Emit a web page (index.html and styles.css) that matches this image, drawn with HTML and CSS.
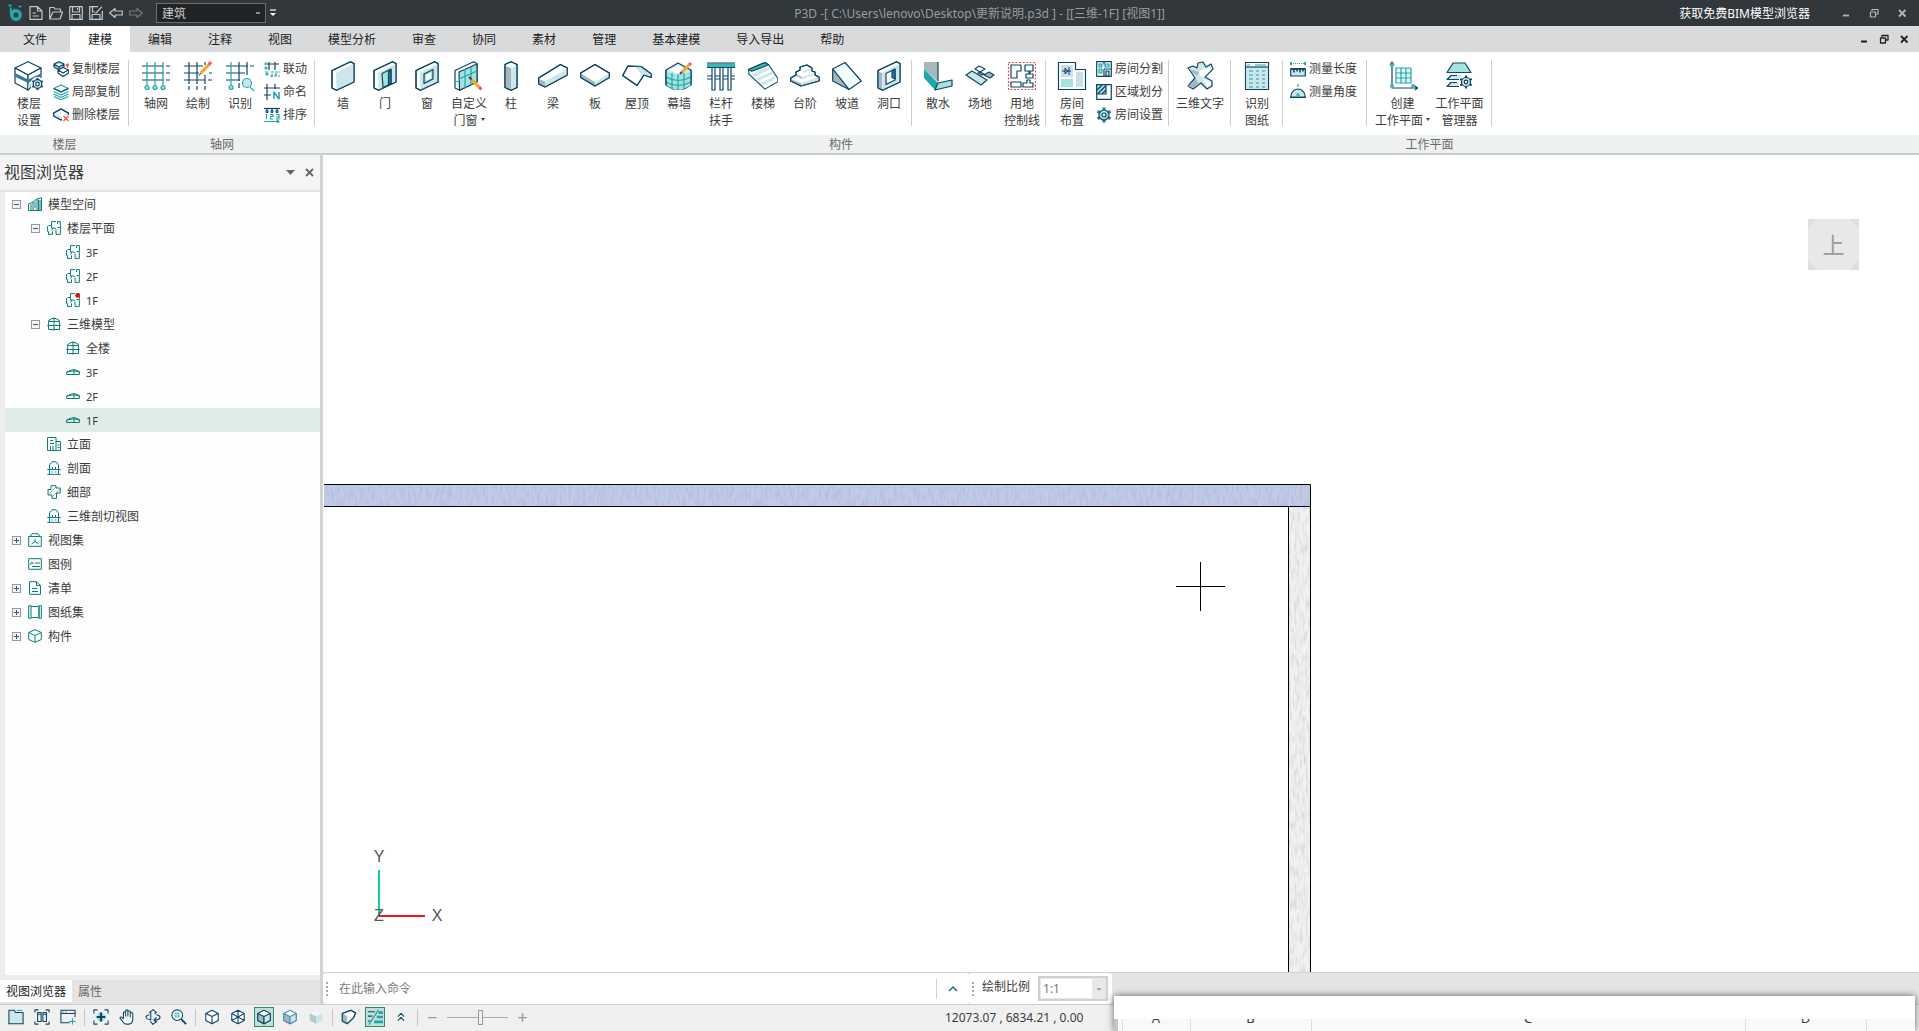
FILE: index.html
```html
<!DOCTYPE html>
<html lang="zh-CN">
<head>
<meta charset="utf-8">
<title>P3D - 三维-1F</title>
<meta name="viewport" content="width=device-width, initial-scale=1">
<link rel="stylesheet" href="styles.css">
</head>
<body>
<svg class="defs" aria-hidden="true">
  <symbol id="plan" viewBox="0 0 14 14"><path d="M1.500 4.500H4.500V.6H9M10.500 3V.6H13.400V6.500H10.500M13.400 7V13.400H9V9M.6 5V10.500H1.500V13.400H5.500V10.500M4.500 4.500V7H6M5 9.500V8L6 7H8L9 8.500"/></symbol>
  <symbol id="tower" viewBox="0 0 14 14"><path d="M1.500 4.500V12.500M12.500 4.500V12.500M7 .3V13.700M.3 8.500H13.700M1.500 12.500H12.500M1.500 4.500H12.500M1 4L5 1.500H9L13 4"/></symbol>
  <symbol id="floor" viewBox="0 0 14 14"><path d="M.6 9.500V7L4 5.500 8 4.500 13.400 6.500V9.500ZM8 4.500V9.500M.6 7L6 6H9L13.400 7"/></symbol>
  <symbol id="section" viewBox="0 0 14 14"><path d="M2.500 8V4L5 .8H9L11.500 4V8M.3 8.500H13.700M2.500 8.500V13M11.500 8.500V13M.3 13.400H13.700M5.500 6V8M8.500 6V8M4.500 11H6M8 11H9.500"/></symbol>
</svg>

<header class="titlebar">
  <div class="quick">
    <svg class="logo" viewBox="0 0 16 18"><circle cx="8.500" cy="11" r="4.200" fill="none" stroke="#22a7b4" stroke-width="3.400"/><path d="M3.300 3.500V10M1 1.500H4M6 5.500h1" stroke="#22a7b4" stroke-width="2"/><path d="M12.500 1v3M11 2.500h3" stroke="#22a7b4" stroke-width="1"/></svg>
    <button aria-label="新建"><svg viewBox="0 0 14 14"><path d="M1 .7H8.500L13 5V13.300H1ZM8.500 .7V5H13M3.500 7H7M3.500 10H10"/></svg></button>
    <button aria-label="打开"><svg viewBox="0 0 14 14"><path d="M.7 13V1.500H5L6 3H11.500V5.500M.7 13L4 6H13.500L11 13Z"/></svg></button>
    <button aria-label="保存"><svg viewBox="0 0 14 14"><path d="M.7 .7H13.300V13.300H.7ZM3.500 1V6H10.500V1M3 13V8.500H11V13M8.500 2V4"/></svg></button>
    <button aria-label="另存为"><svg viewBox="0 0 14 14"><path d="M9 .7H.7V13.300H13.300V5M3.500 1V6H6M3 13V8.500H11V13M13 .7L6.500 7.500"/></svg></button>
    <button aria-label="撤销"><svg viewBox="0 0 14 14"><path d="M.7 7L6 2.500V5H13.300V9H6V11.500Z"/></svg></button>
    <button class="dim" aria-label="重做"><svg viewBox="0 0 14 14"><path d="M13.300 7L8 2.500V5H.7V9H8V11.500Z"/></svg></button>
    <select class="discipline" aria-label="专业"><option>建筑</option></select>
    <button class="custom" aria-label="自定义"><svg viewBox="0 0 6 8"><path d="M0 1h6" stroke="#fff"/><path d="M0 4h6l-3 3z" fill="#fff" stroke="none"/></svg></button>
  </div>
  <div class="doc-title">P3D -[ C:\Users\lenovo\Desktop\更新说明.p3d ] - [[三维-1F] [视图1]]</div>
  <a class="viewer-link" href="#">获取免费BIM模型浏览器</a>
  <div class="win">
    <button aria-label="最小化"><svg viewBox="0 0 10 10"><path d="M2 7.500h6" stroke-width="1.800"/></svg></button>
    <button aria-label="还原"><svg viewBox="0 0 10 10"><path d="M3 3V1.500H9V6H6.500M1.500 4H6.500V9H1.500Z"/></svg></button>
    <button aria-label="关闭"><svg viewBox="0 0 10 10"><path d="M2 2l6.500 6.500M8.500 2L2 8.500" stroke-width="1.800"/></svg></button>
  </div>
</header>

<nav class="menu">
  <button class="file">文件</button><button class="active">建模</button><button>编辑</button><button>注释</button><button>视图</button><button>模型分析</button><button>审查</button><button>协同</button><button>素材</button><button>管理</button><button>基本建模</button><button>导入导出</button><button>帮助</button>
  <div class="win doc">
    <button aria-label="最小化文档"><svg viewBox="0 0 10 10"><path d="M2 7.500h6" stroke-width="2"/></svg></button>
    <button aria-label="还原文档"><svg viewBox="0 0 10 10"><path d="M3 3V1.500H9V6H6.500M1.500 4H6.500V9H1.500Z" stroke-width="1.300"/></svg></button>
    <button aria-label="关闭文档"><svg viewBox="0 0 10 10"><path d="M2 2l6.500 6.500M8.500 2L2 8.500" stroke-width="1.800"/></svg></button>
  </div>
</nav>

<section class="ribbon">
  <div class="group">
    <div class="tools">
      <div class="set storeys">
        <button class="big"><svg viewBox="0 0 30 30"><path class="w" d="M1 7L14 .7 27 7 14 14Z"/><path class="w" d="M1 7L14 14V29L1 22Z"/><path class="w" d="M27 7V16L14 29V14Z"/><path d="M1 12l13 6.500V22L1 15.500zM14 18.500l13-6V15l-13 7z" fill="#2f789f" stroke="none"/><path d="M14 24l7-4v3l-7 5z" class="b" stroke="none"/><circle class="w" cx="23.500" cy="23" r="7" stroke="none"/><path d="M23.500 17v12M18.300 20l10.400 6M18.300 26l10.400-6" stroke-width="2"/><circle class="p" cx="23.500" cy="23" r="4.300"/><circle class="w" cx="23.500" cy="23" r="1.800"/></svg><span>楼层<br>设置</span></button>
        <div class="stack">
          <button><svg viewBox="0 0 16 16"><path class="b" d="M1 3L6 .7 11 3V6L6 9 1 6ZM1 3l5 3 5-3M6 6v3"/><path class="w" d="M5 9l5-2.500L15.500 9v3L10 15.500 5 12ZM5 9l5 3 5.500-3"/><path d="M14.500 7V3M13 4.500L14.500 3 16 4.500" stroke="#ee4b4b"/></svg>复制楼层</button>
          <button><svg viewBox="0 0 16 16"><path class="w n" d="M.7 4.500L8 1l7.300 3.500L8 8Z"/><path class="n" d="M.7 7.500L8 11l7.300-3.500M.7 10L8 13.500 15.300 10M.7 12.500L8 15.700l7.300-3.200"/><path d="M.7 4.500L8 8l7.300-3.500"/></svg>局部复制</button>
          <button><svg viewBox="0 0 16 16"><path class="w" d="M.7 6L8 2l7.300 4v2.500L8 13 .7 9Z"/><path class="p" d="M.7 6L8 9.500 15.300 6v2.500L8 13 .7 9Z" stroke="none"/><path d="M.7 6L8 2l7.300 4v2.500L8 13 .7 9Z"/><path class="w" d="M9 8h7v7H9z" stroke="none"/><path d="M10.500 9l5 5M15.500 9l-5 5" stroke="#ee4b4b"/></svg>删除楼层</button>
        </div>
      </div>
    </div>
    <div class="caption">楼层</div>
  </div>

  <div class="group">
    <div class="tools">
      <div class="set grids">
        <button class="big"><svg viewBox="0 0 30 30"><path d="M1 5H23M1 12H23M1 19H23M25 5h4M25 12h4M25 19h4"/><path class="n" d="M6 1V24M14 1V24M22 1V24"/><circle class="n b" cx="6" cy="26.500" r="2"/><circle class="n b" cx="14" cy="26.500" r="2"/><circle class="n b" cx="22" cy="26.500" r="2"/></svg><span>轴网</span></button>
        <button class="big"><svg viewBox="0 0 30 30"><path d="M1 5H20M1 12H16M1 19H22M26 12h3M25 19h4M6 1V23M14 1V23M22 14V23M22 1v3M6 25v4M14 25v4M22 25v4"/><path d="M18 12L25.500 4" stroke="#f7a51c" stroke-width="3"/><path d="M25.500 4L28 1" stroke="#f05a55" stroke-width="3"/><path d="M16 14.500L18 12" stroke="#444"/></svg><span>绘制</span></button>
        <button class="big"><svg viewBox="0 0 30 30"><path d="M1 5H23M1 12H20M1 19H15M25 5h4M14 1V20M22 1V14M14 22v5"/><path class="n" d="M6 1V24"/><circle class="n b" cx="6" cy="26.500" r="2"/><path class="n" d="M25 26l4 4"/><circle class="n p" cx="22" cy="22" r="4.500"/></svg><span>识别</span></button>
        <div class="stack">
          <button><svg viewBox="0 0 16 16"><path d="M5 1v8M11 1v8M3 3h12"/><path class="n" d="M1 11h4M7 11h9M2 1v3M0 3h2M8 13v3M12 12v4M6 15h10" stroke-dasharray="3 1"/><circle class="n" cx="2" cy="7" r="1"/><circle class="n" cx="3" cy="13" r="1"/></svg>联动</button>
          <button><svg viewBox="0 0 16 16"><path d="M3 0v16M0 4h16M11 0v5M0 11h7"/><path class="n" d="M10 15V8l5 7V8" stroke-width="1.500"/></svg>命名</button>
          <button><svg viewBox="0 0 16 16"><path d="M0 1.500h16"/><path d="M3 1v3M8 1v3M13 1v3"/><circle cx="3" cy="4.500" r="1"/><circle cx="8" cy="4.500" r="1"/><circle cx="13" cy="4.500" r="1"/><path class="n" d="M2.500 7v5M6 7.500h3v2H6.500V12H9M12 7.500h3V12h-3M12 10h3M0 14.500h15M13 13l2 1.500-2 1.500"/></svg>排序</button>
        </div>
      </div>
    </div>
    <div class="caption">轴网</div>
  </div>

  <div class="group">
    <div class="tools">
      <div class="set parts">
        <button class="big"><svg viewBox="0 0 30 30"><path class="w" d="M4 9.500L22.500 .7 26 2.500V21L8.500 29.300 4 27Z"/><path class="p" d="M8 12L26 2.500V21L8.500 29.300Z" stroke="none"/><path d="M4 9.500L22.500 .7 26 2.500V21L8.500 29.300 4 27Z"/></svg><span>墙</span></button>
        <button class="big"><svg viewBox="0 0 30 30"><path class="w" d="M4 9.500L22.500 .7 26 2.500V21L8.500 29.300 4 27Z"/><path class="p" d="M8 12L26 2.500V21L8.500 29.300Z" stroke="none"/><path d="M4 9.500L22.500 .7 26 2.500V21L8.500 29.300 4 27Z"/><path class="b" d="M12 12.500L21 8V22.500L13 26.500Z"/><path d="M18.500 10.500L21 9V22L18.500 23.500Z" fill="#2f789f"/></svg><span>门</span></button>
        <button class="big"><svg viewBox="0 0 30 30"><path class="w" d="M4 9.500L22.500 .7 26 2.500V21L8.500 29.300 4 27Z"/><path class="p" d="M8 12L26 2.500V21L8.500 29.300Z" stroke="none"/><path d="M4 9.500L22.500 .7 26 2.500V21L8.500 29.300 4 27Z"/><path class="b" d="M12 13L21 8.500V18L12 22.500Z"/><path class="w" d="M14 14l5-2.500V17l-5 2.500z" stroke="none"/></svg><span>窗</span></button>
        <button class="big"><svg viewBox="0 0 30 30"><path class="w" d="M1 9.500L19.500 .7 23 2.500V21L5.500 29.300 1 27Z"/><path class="b" d="M5 11L23 3V21L5.500 29.300Z"/><path class="n" d="M5 18L23 10M11 8V27M17 6V24M1 20l4 1"/><path d="M17.500 18.500L25 26" stroke="#f7a51c" stroke-width="3"/><path d="M25 26l2.500 2.500" stroke="#f05a55" stroke-width="3"/><path d="M15 16l2.500 2.500" stroke="#444" stroke-width="2"/></svg><span>自定义<br>门窗<i></i></span></button>
        <button class="big"><svg viewBox="0 0 30 30"><path class="w" d="M9 3.500L15 .7 21 3.500V26.500L15 29.300 9 26.500Z"/><path class="g" d="M9.500 5L15 7V29L9.500 26Z" stroke="none"/><path class="p" d="M15 7l5.500-2V26L15 29z" stroke="none"/><path d="M9 3.500L15 .7 21 3.500V26.500L15 29.300 9 26.500Z"/></svg><span>柱</span></button>
        <button class="big"><svg viewBox="0 0 30 30"><path class="w" d="M.7 17L22.500 3.500 29.300 7V14L7 26 .7 23Z"/><path class="p" d="M7 20L29.300 8V14L7 26Z" stroke="none"/><path d="M1 18L7 20.500V26L1 23Z" class="g" stroke="none"/><path d="M.7 17L22.500 3.500 29.300 7V14L7 26 .7 23Z"/></svg><span>梁</span></button>
        <button class="big"><svg viewBox="0 0 30 30"><path class="w" d="M.7 12L15 3.500 29.300 12V16.500L15 25 .7 16.500Z"/><path class="g" d="M1 12.500L15 21V25L1 16.500Z" stroke="none"/><path class="p" d="M15 21l14-8.500v4L15 25z" stroke="none"/><path d="M.7 12L15 3.500 29.300 12V16.500L15 25 .7 16.500Z"/></svg><span>板</span></button>
        <button class="big"><svg viewBox="0 0 30 30"><path class="w" d="M.7 14.500L6 5 19 5.500 29.300 13V16.500L22 14 15 24.500Z"/><path class="p" d="M13 5.500H19L29 13v3l-7-2-3-1z" stroke="none"/><path d="M.7 14.500L6 5 19 5.500 29.300 13V16.500L22 14 15 24.500Z"/></svg><span>屋顶</span></button>
        <button class="big"><svg viewBox="0 0 30 30"><path class="p" d="M2 9L14 2 27 9V24L20 28H9L2 24Z"/><path class="w" d="M5 9l9-5 6 4-6 5z" stroke="none"/><path class="b" d="M2.500 10Q14 18 27 10V24Q14 33 2.500 24Z" stroke="none"/><path class="n" d="M2 16Q14 23 27 16M2 21Q14 28 27 21M8 12V28M14 13V29M20 12V28"/><path d="M2 9v15M27 9v15"/><path d="M18 11L25 4" stroke="#f7a51c" stroke-width="3"/><path d="M25 4l2-2" stroke="#f05a55" stroke-width="3"/><path d="M16 13l2-2" stroke="#444" stroke-width="2"/></svg><span>幕墙</span></button>
        <button class="big"><svg viewBox="0 0 30 30"><path class="t" d="M1 2.500H29V6.500H1Z" stroke="none"/><path d="M1 2H29M1 6.500H29M1 15h28M1 18h28"/><path class="w" d="M6 7V29H9V7M14 7V29H17V7M22 7V29H25V7"/></svg><span>栏杆<br>扶手</span></button>
        <button class="big"><svg viewBox="0 0 32 30"><path class="w" d="M.7 8L18 .7 22 3 32 18V21L18 29 1 13Z"/><path class="t" d="M.7 8L18 .7 22 3 4 10Z"/><path class="p" d="M4 13l19-8v3L7 16zM8 18l18-8v3l-15 7zM13 23l16-8v3l-13 7z" stroke="none"/></svg><span>楼梯</span></button>
        <button class="big"><svg viewBox="0 0 30 30"><path class="w" d="M.7 17L6 14V11l4-2V6l7-2 5 3v3l3 1v3l4 2v4L11 25 .7 20Z"/><path class="g" d="M1 18l10 4v3L1 20zM6 13l6 3v2l-6-3z" stroke="none"/><path class="p" d="M11 22l18-6v3L11 25zM12 16l13-4v2l-13 4zM13 10l9-3v2l-9 3z" stroke="none"/><path d="M.7 17L6 14V11l4-2V6l7-2 5 3v3l3 1v3l4 2v4L11 25 .7 20Z"/></svg><span>台阶</span></button>
        <button class="big"><svg viewBox="0 0 30 30"><path fill="#f2fcfc" d="M.7 8L13 1.500 29.300 20 17 28.500Z"/><path class="g" d="M.7 8L17 28.500.7 20Z"/></svg><span>坡道</span></button>
        <button class="big"><svg viewBox="0 0 30 30"><path class="w" d="M4 9.500L22.500 .7 26 2.500V21L8.500 29.300 4 27Z"/><path class="p" d="M8 12L26 2.500V21L8.500 29.300Z" stroke="none"/><path class="g" d="M4 10l4 2V29l-4-2z" stroke="none"/><path d="M4 9.500L22.500 .7 26 2.500V21L8.500 29.300 4 27Z"/><path class="w" d="M12 12.500L21 8V19L12 23.500Z"/><path d="M18 10l3-1.500V18l-3-1.500z" fill="#2f789f"/></svg><span>洞口</span></button>
      </div>
      <div class="set site">
        <button class="big"><svg viewBox="0 0 30 30"><path class="g" d="M1 1H15V21L1 8Z" stroke="none"/><path d="M15 1V20"/><path d="M1 8L15 22 12 29 1 17Z" class="d" stroke="none"/><path d="M15 22L29 19v6L12 29Z" class="b"/></svg><span>散水</span></button>
        <button class="big"><svg viewBox="0 0 30 30"><path class="p" d="M1 14L7 10 22 19 16 24Z"/><path class="w" d="M10 8l4-3 6 3-5 3z"/><path class="g" d="M19 14l5-3 5 3-4 3zM13 12l2-1 4 2-2 1z"/></svg><span>场地</span></button>
        <button class="big"><svg viewBox="0 0 30 30"><path d="M1.500 1.500H28.500V28.500H1.500Z" stroke="#ee4b4b" stroke-dasharray="2 1.500"/><path class="w" d="M4 4H14V10H10V17H4ZM18 4h8v6h-3v3h3v4h-7v-4h3v-3h-4zM4 21H14v5H4ZM16 22h4v-3h3v3h3v4H16z"/></svg><span>用地<br>控制线</span></button>
      </div>
      <div class="set rooms">
        <button class="big"><svg viewBox="0 0 30 30"><path class="w" d="M1.500 1.500H18.500V8.500H28.500V28.500H1.500Z"/><path fill="#c9dfe9" d="M4 4H16V16H4ZM19 11h7v15h-7z" stroke="none"/><path class="b" d="M4 18H16v8H4Z" stroke="none"/><path d="M5 10h9M8 7v6l3-3zM12 6v8" stroke-width="1"/></svg><span>房间<br>布置</span></button>
        <div class="stack">
          <button><svg viewBox="0 0 16 16"><path class="w" d="M.7 .7H15.300V15.300H.7ZM8 .7V3.500M8 8h7.300M8 8v7.300"/><path class="n b" d="M3 3h3v3H3zM9 3h4v3H9zM3 8h3v4H3z"/><path class="p" d="M10 10h3v5h-3z"/></svg>房间分割</button>
          <button><svg viewBox="0 0 16 16"><path class="w" d="M.7 .7H15.300V15.300H.7Z"/><path class="b" d="M.7 .7H10V10H.7Z"/><path d="M1 6L6 1M2 9.500L9.500 2M6 10l4-4"/></svg>区域划分</button>
          <button><svg viewBox="0 0 16 16"><path d="M8 .5v15M1.500 4.200l13 7.600M1.500 11.800l13-7.600" stroke="#2f789f" stroke-width="3"/><circle class="b" cx="8" cy="8" r="5"/><circle class="w" cx="8" cy="8" r="2"/></svg>房间设置</button>
        </div>
      </div>
      <div class="set text3d">
        <button class="big"><svg viewBox="0 0 30 30"><path class="p" d="M3 7L8 5 12 7 13 2 18 1 21 6 26 3 28 8 20 16 27 20 27 25 22 28 16 22 8 28 3 25 10 17 6 11Z"/><path class="g" d="M4 8l10 3-2 4-4-3zM3 25l8-7 3 5-6 4z" stroke="none"/><path class="w" d="M14 10l8-3 4-2 1 3-8 8-4-1zM18 18l8 3v3l-4 2z" stroke="none"/></svg><span>三维文字</span></button>
      </div>
      <div class="set sheets">
        <button class="big"><svg viewBox="0 0 30 30"><path class="w" d="M3.500 1.500H26.500V28.500H3.500Z"/><path class="p" d="M4 6H26V28H4Z" stroke="none"/><path d="M3.500 6H26.500"/><path class="n" d="M5 4h3M13 4h11M7 10h4M14 10h3M20 10h3M7 14h4M14 14h3M20 14h3M7 18h4M14 18h3M20 18h3M7 22h4M14 22h3M20 22h3M7 26h4M14 26h3M20 26h3"/></svg><span>识别<br>图纸</span></button>
      </div>
      <div class="set measures">
        <div class="stack">
          <button><svg viewBox="0 0 16 16"><path class="n" d="M1 2.500h14" stroke-dasharray="1 1"/><path d="M0 2.500h2M14 2.500h2" class="n" stroke-width="3"/><path class="p" d="M.7 7.700H15.300V15H.7Z"/><path d="M1 8h14M4 8v3.500M7 8v2.500M10 8v3.500M13 8v2.500" stroke-width="1.500"/></svg>测量长度</button>
          <button><svg viewBox="0 0 16 16"><path class="p" d="M1 13.300V12a7 7 0 0114 0V13.300Z"/><path d="M0 13.300H16"/><path class="n" d="M8 0v3M6 11h4M8 9v3"/></svg>测量角度</button>
        </div>
      </div>
    </div>
    <div class="caption">构件</div>
  </div>

  <div class="group">
    <div class="tools">
      <div class="set plane">
        <button class="big"><svg viewBox="0 0 30 30"><path d="M4 2V27H29M2 4l2-3 2 3M27 25l2.500 2-2.500 2"/><path class="n" fill="#e8fbfb" d="M8 7H23V22H8ZM13 7V22M18 7V22M8 12H23M8 17H23"/><circle class="t" cx="4" cy="4" r="2" stroke="none"/><circle class="t" cx="4" cy="25" r="2" stroke="none"/><circle class="t" cx="25" cy="25" r="2" stroke="none"/></svg><span>创建<br>工作平面<i></i></span></button>
        <button class="big"><svg viewBox="0 0 30 30"><path class="b" d="M8 2H20L26 11.500H2Z"/><path class="p" d="M6 14H22V18H2ZM5 21H16V25H2Z" stroke="none"/><path d="M12 14.500H6L2 18.500H14M12 21.500H6L2 25.500H14"/><circle class="w" cx="21" cy="21" r="7.500" stroke="none"/><path d="M21 14.500v13M15.300 17.800l11.400 6.500M15.300 24.300l11.400-6.500" stroke-width="2"/><circle class="p" cx="21" cy="21" r="4.500"/><circle class="w" cx="21" cy="21" r="1.800"/></svg><span>工作平面<br>管理器</span></button>
      </div>
    </div>
    <div class="caption">工作平面</div>
  </div>
</section>

<main class="workspace">
  <aside class="panel">
    <div class="panel-head">
      <h2>视图浏览器</h2>
      <button aria-label="选项"><svg viewBox="0 0 10 10"><path d="M1 3h9L5.500 8z" fill="#666" stroke="none"/></svg></button>
      <button aria-label="关闭面板"><svg viewBox="0 0 10 10"><path d="M2 2l7 7M9 2L2 9" stroke="#666" stroke-width="1.800"/></svg></button>
    </div>
    <ul class="tree">
      <li><div class="row"><button class="exp open" aria-label="折叠"></button><svg viewBox="0 0 14 14"><path d="M.5 13.500V7L5 5V13.500ZM5 5L9 2V13.500M9 2L13.500 .7V13.500H.5M2 8h2M2 10h2M2 12h2M6 6h2M6 8h2M6 10h2M10.500 3v10M12 3v10"/></svg>模型空间</div>
        <ul>
          <li><div class="row"><button class="exp open" aria-label="折叠"></button><svg><use href="#plan"/></svg>楼层平面</div>
            <ul>
              <li><div class="row storey"><svg><use href="#plan"/></svg>3F</div></li>
              <li><div class="row storey"><svg><use href="#plan"/></svg>2F</div></li>
              <li><div class="row storey"><svg><use href="#plan"/><circle cx="11.500" cy="2.500" r="2.200" fill="#f00" stroke="none"/></svg>1F</div></li>
            </ul></li>
          <li><div class="row"><button class="exp open" aria-label="折叠"></button><svg><use href="#tower"/></svg>三维模型</div>
            <ul>
              <li><div class="row"><svg><use href="#tower"/></svg>全楼</div></li>
              <li><div class="row storey"><svg><use href="#floor"/></svg>3F</div></li>
              <li><div class="row storey"><svg><use href="#floor"/></svg>2F</div></li>
              <li><div class="row storey selected"><svg><use href="#floor"/></svg>1F</div></li>
            </ul></li>
          <li><div class="row"><svg viewBox="0 0 14 14"><path d="M.5 .5H9V13.500H.5ZM9 4.500H13.500V13.500H9M3 3.500H6M3 6.500H7M3.500 9V13M6 9V13M10.500 8h2M10.500 10.500h2"/></svg>立面</div></li>
          <li><div class="row"><svg><use href="#section"/></svg>剖面</div></li>
          <li><div class="row"><svg viewBox="0 0 14 14"><path d="M2 9L9 2M5 12L13 4" stroke="#aaa"/><path d="M4 .7H9V3H13.300V8H9.500V13.300H5V10H1V4.500H4Z"/></svg>细部</div></li>
          <li><div class="row"><svg><use href="#section"/></svg>三维剖切视图</div></li>
        </ul></li>
      <li><div class="row"><button class="exp" aria-label="展开"></button><svg viewBox="0 0 14 14"><path d="M.7 3.500H13.300V13.300H.7ZM2 3.500L4 .7H10L12 3.500M7 6v2.500M7 8.500L3.500 11M7 8.500L10.500 11"/></svg>视图集</div></li>
      <li><div class="row"><svg viewBox="0 0 14 14"><path d="M.7 1.700H13.300V12.300H.7ZM2 8L4 5 5.500 7M7 6h5M4 9.500h8"/></svg>图例</div></li>
      <li><div class="row"><button class="exp" aria-label="展开"></button><svg viewBox="0 0 14 14"><path d="M1.500 .7H8.500L12.500 4.500V13.300H1.500ZM8.500 .7V4.500H12.500M4 7.500H9M4 10.500H10"/></svg>清单</div></li>
      <li><div class="row"><button class="exp" aria-label="展开"></button><svg viewBox="0 0 14 14"><path d="M.7 .7H3V13.300H.7ZM3 1.500H11V12.500H3M11 .7h2.300V13.300H11Z"/></svg>图纸集</div></li>
      <li><div class="row"><button class="exp" aria-label="展开"></button><svg viewBox="0 0 14 14"><path d="M.7 3.500L7 .7l6.300 2.800V10.500L7 13.300 .7 10.500ZM.7 3.500L7 6.500l6.300-3M7 6.500V13"/></svg>构件</div></li>
    </ul>
    <div class="tabs"><button class="active">视图浏览器</button><button>属性</button></div>
  </aside>

  <div class="stage">
    <div class="canvas">
      <svg class="drawing">
        <defs>
          <filter id="grain" x="0" y="0" width="100%" height="100%">
            <feTurbulence type="fractalNoise" baseFrequency="0.35 0.09" numOctaves="2" seed="4"/>
            <feColorMatrix values="0 0 0 0 .3  0 0 0 0 .35  0 0 0 0 .45  1.200 0 0 0 -.5"/>
          </filter>
        </defs>
        <rect x="966" y="351" width="21" height="100%" fill="#f1f1f1"/>
        <rect x="966" y="351" width="21" height="100%" filter="url(#grain)" opacity=".6"/>
        <path d="M965.500 351V2000M987.500 351V2000" stroke="#000"/>
        <rect x="1" y="329" width="986" height="22" fill="#bfcbe7"/>
        <rect x="1" y="330" width="986" height="21" filter="url(#grain)" opacity=".6"/>
        <path d="M1 329.500H987.500V351.500H1" fill="none" stroke="#000"/>
        <path d="M853 431.500H902M877.500 407V456" stroke="#000"/>
        <path d="M56 715V761" stroke="#12cfa0" stroke-width="2"/>
        <path d="M56 761H102" stroke="#f41414" stroke-width="2"/>
        <g class="axis" text-anchor="middle"><text x="56" y="707">Y</text><text x="56" y="766">Z</text><text x="114" y="766">X</text></g>
      </svg>
      <button class="viewcube">上</button>
    </div>
    <div class="commands">
      <div class="bar cmd">
        <span class="grip"></span>
        <input aria-label="命令" placeholder="在此输入命令">
        <button aria-label="展开命令"><svg viewBox="0 0 10 10"><path d="M1 7l4-4 4 4" stroke="#2b6a8c" stroke-width="1.600"/></svg></button>
      </div>
      <div class="bar scale">
        <span class="grip"></span>
        <label for="ratio">绘制比例</label>
        <select id="ratio"><option>1:1</option></select>
      </div>
    </div>
  </div>
</main>

<footer class="status">
  <div class="icons">
    <button aria-label="文件夹"><svg viewBox="0 0 18 18"><path class="p" d="M1 16.500V1.500H7L8.500 4H17V16.500Z"/><path class="n" d="M10 1.500h6"/></svg></button>
    <button aria-label="平铺窗口"><svg viewBox="0 0 18 18"><path d="M1 4V1H5M13 1h4V4M1 14v3H5M13 17h4V14M4 4H8V14H4ZM10 4h4v10h-4zM4 6h4M10 6h4"/></svg></button>
    <button aria-label="新建窗口"><svg viewBox="0 0 18 18"><path d="M11 15.500H1V1.500H17V9M1 5H17M3 3.300h1M6 3.300h1"/><path class="n" d="M14 10.500v7M10.500 14h7"/></svg></button>
    <span class="bar-sep"></span>
    <button aria-label="全图"><svg viewBox="0 0 18 18"><circle class="b" cx="9" cy="9" r="5" stroke="none"/><path d="M1 5V1H5M13 1h4V5M1 13v4H5M13 17h4V13"/><path d="M9 4V14M4 9H14" stroke-width="2.500"/></svg></button>
    <button aria-label="平移"><svg viewBox="0 0 18 18"><path class="w" d="M5 11V4Q6 2 7.500 4V8 2Q9 0 10 2V8 3Q11.500 1 12.700 3V9 5Q14 3 15.500 5V12Q15 17 11 17H8Q6 17 4 14L1 10Q2 8 4 10Z"/></svg></button>
    <button aria-label="旋转"><svg viewBox="0 0 18 18"><path d="M6.500 13V4H5L9 .7 13 4H11.500V6M11.500 13V14H13L9 17.300 6 14M5 6.500Q1 7.500 1 9 1.500 11.500 6 12M13 6.500Q17 7.500 17 9.500 16 12 11 12.500M13 9.500L10 12.300 13 15"/></svg></button>
    <button aria-label="缩放"><svg viewBox="0 0 18 18"><circle class="w" cx="7" cy="7" r="6"/><circle class="b" cx="7" cy="7" r="3.500" stroke="none"/><path class="n" d="M5 5h1M8 5h1M5 8h1M8 8h1" stroke-width="1.500"/><path d="M11.500 11.500L17 17" stroke-width="2"/></svg></button>
    <span class="bar-sep"></span>
    <button aria-label="线框"><svg viewBox="0 0 18 18"><path class="w" d="M2 5L9 1.500 16 5V13L9 16.500 2 13ZM2 5L9 8.500 16 5M9 8.500V16.500"/></svg></button>
    <button aria-label="透视线框"><svg viewBox="0 0 18 18"><path class="w" d="M2 5L9 1.500 16 5V13L9 16.500 2 13ZM2 5l14 8M16 5L2 13M9 1.500V16.500"/></svg></button>
    <button class="on" aria-label="隐藏线"><svg viewBox="0 0 18 18"><path class="w" d="M2 5L9 1.500 16 5V13L9 16.500 2 13Z"/><path class="g" d="M2 5L9 8.500V16.500L2 13Z"/><path class="p" d="M9 8.500L16 5V13L9 16.500Z"/></svg></button>
    <button class="shaded" aria-label="着色"><svg viewBox="0 0 18 18"><path class="w" d="M2 5L9 1.500 16 5V13L9 16.500 2 13Z"/><path class="g" d="M2 5L9 8.500V16.500L2 13Z"/><path class="p" d="M9 8.500L16 5V13L9 16.500Z"/></svg></button>
    <button aria-label="真实"><svg viewBox="0 0 18 18"><g stroke="none"><path fill="#e9f7f7" d="M2 5L9 2 16 5 9 8.500Z"/><path fill="#b5c8cc" d="M2 5L9 8.500V16.500L2 13Z"/><path class="p" d="M9 8.500L16 5V13L9 16.500Z"/></g></svg></button>
    <span class="bar-sep"></span>
    <button aria-label="剖切框"><svg viewBox="0 0 18 18"><path class="w" d="M1.500 5L11 1.500 16.500 4.500 14 10 7 16.500 1.500 13.500Z"/><path class="g" d="M1.500 5L7 8V16.500L1.500 13.500Z" stroke="none"/><path d="M1.500 5L11 1.500 16.500 4.500 14 10 7 16.500 1.500 13.500Z"/></svg></button>
    <button class="on" aria-label="线宽"><svg viewBox="0 0 18 18"><path d="M1 3h8M1 8h5M1 13.500h3"/><path class="n" d="M2 17.500L13 1" stroke-width="1.500"/><path class="n" d="M13 4h5M11 9h7M8 14.500h10" stroke-width="3"/></svg></button>
    <button aria-label="更多"><svg viewBox="0 0 18 18"><path d="M5.500 8.500L9 5l3.500 3.500M5.500 13L9 9.500l3.500 3.500"/></svg></button>
    <span class="bar-sep"></span>
    <button class="zoom" aria-label="缩小">−</button>
    <input type="range" aria-label="显示比例" min="0" max="100" value="55">
    <button class="zoom" aria-label="放大">+</button>
  </div>
  <output class="coords">12073.07 , 6834.21 , 0.00</output>
</footer>

<div class="sheet">
  <div class="sheet-view">
    <table>
      <tr><th></th><th>A</th><th>B</th><th>C</th><th>D</th><th></th></tr>
    </table>
  </div>
</div>
</body>
</html>
```
FILE: styles.css
```css
* { box-sizing: border-box; }
html, body { height: 100%; }
body {
  margin: 0;
  display: flex;
  flex-direction: column;
  overflow: hidden;
  position: relative;
  font: 12px/17px "Noto Sans", "Noto Sans CJK SC", sans-serif;
  color: #3c3c3c;
  background: #f0f0f0;
}
button, input, select { font: inherit; color: inherit; }
button { border: 0; padding: 0; background: none; }
svg { display: block; flex: none; fill: none; stroke: #0e4566; stroke-width: 1.2; stroke-linejoin: round; }
.defs { position: absolute; width: 0; height: 0; }
.w { fill: #fff; }
.p { fill: #cbe7ea; }
.b { fill: #a3e2dd; }
.t { fill: #35b9bb; }
.d { fill: #1fa5ad; }
.g { fill: #a5b9bd; }
.n { stroke: #1fa5ad; }

/* title bar */
.titlebar {
  flex: none;
  height: 26px;
  display: flex;
  align-items: center;
  background: #31373b;
  color: #9a9c9e;
}
.quick { display: flex; align-items: center; padding-left: 7px; }
.quick button { width: 20px; display: flex; justify-content: center; }
.quick svg { width: 14px; height: 14px; stroke: #c3c7c9; }
.quick .logo { width: 17px; height: 18px; margin-right: 2px; }
.quick .dim svg { stroke: #73787b; }
.quick .custom { width: 14px; }
.quick .custom svg { width: 6px; height: 8px; }
.discipline {
  appearance: none;
  width: 110px;
  height: 20px;
  margin-left: 10px;
  padding: 0 5px;
  border: 1px solid #6b6e70;
  color: #c8c8c8;
  background: linear-gradient(#888, #888) no-repeat right 5px center / 4px 2px #222324;
}
.doc-title { flex: 1; text-align: center; white-space: nowrap; overflow: hidden; }
.viewer-link { color: #fff; text-decoration: none; white-space: nowrap; }
.win { display: flex; gap: 18px; padding: 0 12px 0 31px; }
.win svg { width: 10px; height: 10px; stroke: #b4b6b8; }

/* menu */
.menu { flex: none; height: 26px; display: flex; background: #d9dadc; }
.menu > button { padding: 0 18px; white-space: nowrap; color: #222; }
.menu > .file { width: 70px; }
.menu > .active { background: #fff; }
.win.doc { margin-left: auto; align-items: center; gap: 10px; padding: 0 10px 0 0; }
.win.doc svg { stroke: #222; }

/* ribbon */
.ribbon {
  flex: none;
  display: flex;
  background: linear-gradient(#fff 83px, #edf1f2 83px);
  border-bottom: 2px solid #cdcdcd;
  white-space: nowrap;
}
.group { display: flex; flex-direction: column; }
.tools { height: 83px; padding-top: 8px; display: flex; }
.caption { height: 18px; line-height: 19px; text-align: center; color: #6a6a6a; }
.set { display: flex; align-items: flex-start; height: 66px; padding: 0 5px; border-right: 1px solid #cfcfcf; }
.storeys { padding: 0 8px; }
.grids { padding: 0 7px 0 6px; }
.parts { padding: 0 1px 0 7px; }
.site { padding: 0 2px 0 5px; }
.rooms { padding: 0 5px; }
.text3d { padding: 0 5px 0 6px; }
.sheets { padding: 0 4px 0 5px; }
.measures { padding: 0 9px 0 4px; }
.plane { padding: 0 3px 0 7px; }
.big { width: 42px; display: flex; flex-direction: column; align-items: center; gap: 4px; }
.big svg { width: 30px; height: 30px; margin-top: 1px; }
.text3d .big { width: 50px; }
.plane .big { width: 57px; }
.big i {
  display: inline-block;
  margin-left: 3px;
  vertical-align: 4px;
  border: 2px solid transparent;
  border-top: 3px solid #444;
  border-bottom: 0;
}
.stack { display: flex; flex-direction: column; padding-left: 3px; }
.stack button { height: 23px; padding-bottom: 6px; display: flex; align-items: center; gap: 3px; }
.stack svg { width: 16px; height: 16px; }

/* workspace */
.workspace { flex: 1; min-height: 0; display: flex; }
.panel {
  flex: none;
  width: 323px;
  display: flex;
  flex-direction: column;
  background: #ededed;
  border-right: 3px solid #d3d3d3;
}
.panel-head {
  display: flex;
  align-items: center;
  gap: 9px;
  height: 37px;
  padding: 0 6px 2px 4px;
  background: #f5f5f5;
  border-bottom: 2px solid #e4e4e4;
}
.panel-head h2 { flex: 1; margin: 0; font-size: 16px; font-weight: 400; line-height: 24px; }
.panel-head svg { width: 10px; height: 10px; }
.tree { flex: 1; min-height: 0; margin: 0 0 5px 5px; overflow: hidden; background: #fdfdfd; --indent: 7px; }
.tree, .tree ul { list-style: none; padding: 0; }
.tree ul { margin: 0; --indent: 26px; }
.tree ul ul { --indent: 45px; }
.row { display: flex; align-items: center; height: 24px; padding-left: calc(var(--indent) + 16px); }
.row:has(.exp) { padding-left: var(--indent); }
.row svg { width: 14px; height: 14px; margin-right: 6px; stroke: #0b7d7b; stroke-width: 1; }
.row.storey { font-size: 11px; }
.row.selected { background: #dfede9; }
.exp {
  width: 9px;
  height: 9px;
  margin-right: 7px;
  border: 1px solid #989898;
  background:
    linear-gradient(#35509a, #35509a) center / 5px 1px no-repeat,
    linear-gradient(#35509a, #35509a) center / 1px 5px no-repeat,
    #f4f4f4;
}
.exp.open { background: linear-gradient(#35509a, #35509a) center / 5px 1px no-repeat, #f4f4f4; }
.tabs { height: 24px; display: flex; padding-bottom: 2px; background: #e4e4e4; }
.tabs button { padding: 0 6px; color: #6a6a6a; }
.tabs .active { background: #fff; color: #222; }

.stage { flex: 1; min-width: 0; display: flex; flex-direction: column; }
.canvas { flex: 1; position: relative; background: #fff; border-bottom: 1px solid #d0d0d0; overflow: hidden; }
.drawing { position: absolute; inset: 0; width: 100%; height: 100%; stroke-width: 1; }
.drawing rect { stroke: none; }
.axis { fill: #555; stroke: none; font: 16px "Liberation Sans", sans-serif; }
.viewcube {
  position: absolute;
  top: 64px;
  right: 60px;
  width: 51px;
  height: 51px;
  font-size: 22px;
  color: #9c9c9c;
  background: linear-gradient(45deg, #dfdfdf 7px, transparent 7px calc(100% - 7px), #dfdfdf calc(100% - 7px)),
    linear-gradient(135deg, #dfdfdf 7px, #e8e8e8 7px calc(100% - 7px), #dfdfdf calc(100% - 7px));
}
.commands { flex: none; height: 31px; display: flex; background: #e4e4e4; }
.bar { display: flex; align-items: center; background: #fff; border-radius: 3px; }
.cmd { width: 646px; padding-left: 3px; }
.cmd input { flex: 1; height: 20px; padding: 0; margin-left: 11px; border: 0; border-right: 1px solid #d0d0d0; outline: 0; background: none; }
.cmd input::placeholder { color: #7c7c7c; }
.cmd button { width: 32px; display: flex; justify-content: center; }
.cmd svg { width: 10px; height: 10px; }
.grip { flex: none; width: 2px; height: 14px; background: repeating-linear-gradient(#aaa 0 2px, transparent 2px 4px); }
.scale { padding: 0 4px 0 3px; }
.scale label { padding: 0 8px 4px; }
.scale select {
  appearance: none;
  width: 70px;
  height: 25px;
  padding: 0 3px;
  border: 2px solid #d0d0d0;
  color: #777;
  background: linear-gradient(#aaa, #aaa) no-repeat right 5px center / 4px 2px,
    linear-gradient(#fff, #fff) no-repeat 1px 1px / 51px 19px #e8e8e8;
}

/* status bar */
.status { flex: none; height: 27px; padding-bottom: 2px; display: flex; align-items: center; border-top: 1px solid #cdcdcd; background: #f0f0f0; }
.icons { display: flex; align-items: center; gap: 6px; padding-left: 6px; width: 945px; }
.icons button { width: 20px; height: 20px; display: flex; align-items: center; justify-content: center; }
.icons svg { width: 16px; height: 16px; }
.icons .on { background: #c3dfd8; outline: 1px solid #2d8a75; outline-offset: -1px; }
.icons .shaded svg { stroke: #4a8db5; }
.bar-sep { width: 1px; height: 17px; background: #c6c6c6; }
.icons .zoom { font-size: 18px; width: 17px; color: #999; }
.icons input { appearance: none; width: 61px; height: 16px; margin: 0; background: linear-gradient(#aaa, #aaa) center / 100% 1px no-repeat; }
.icons input::-webkit-slider-thumb { appearance: none; width: 5px; height: 15px; border: 1px solid #999; background: #f0f0f0; }
.coords { white-space: nowrap; }

/* spreadsheet window over the lower right corner */
.sheet {
  position: absolute;
  left: 1114px;
  right: 4px;
  bottom: 0;
  height: 35px;
  padding-top: 23px;
  background: #fff;
  box-shadow: 0 0 7px rgba(0, 0, 0, .6);
}
/* the header row is scrolled half out of view */
.sheet-view { height: 12px; overflow: hidden; background: #f8f9fb; border-left: 4px solid #c3c3c9; }
.sheet table { width: 100%; margin-top: -12px; table-layout: fixed; border-collapse: collapse; }
.sheet th { height: 24px; padding: 0; vertical-align: top; font-weight: 400; font-size: 13px; line-height: 22px; border-right: 1px solid #dcdee0; }
.sheet th:nth-child(1) { width: 4px; }
.sheet th:nth-child(2) { width: 68px; }
.sheet th:nth-child(3), .sheet th:nth-child(5) { width: 121px; }
.sheet th:nth-child(6) { width: 49px; border-right: 0; }
```
